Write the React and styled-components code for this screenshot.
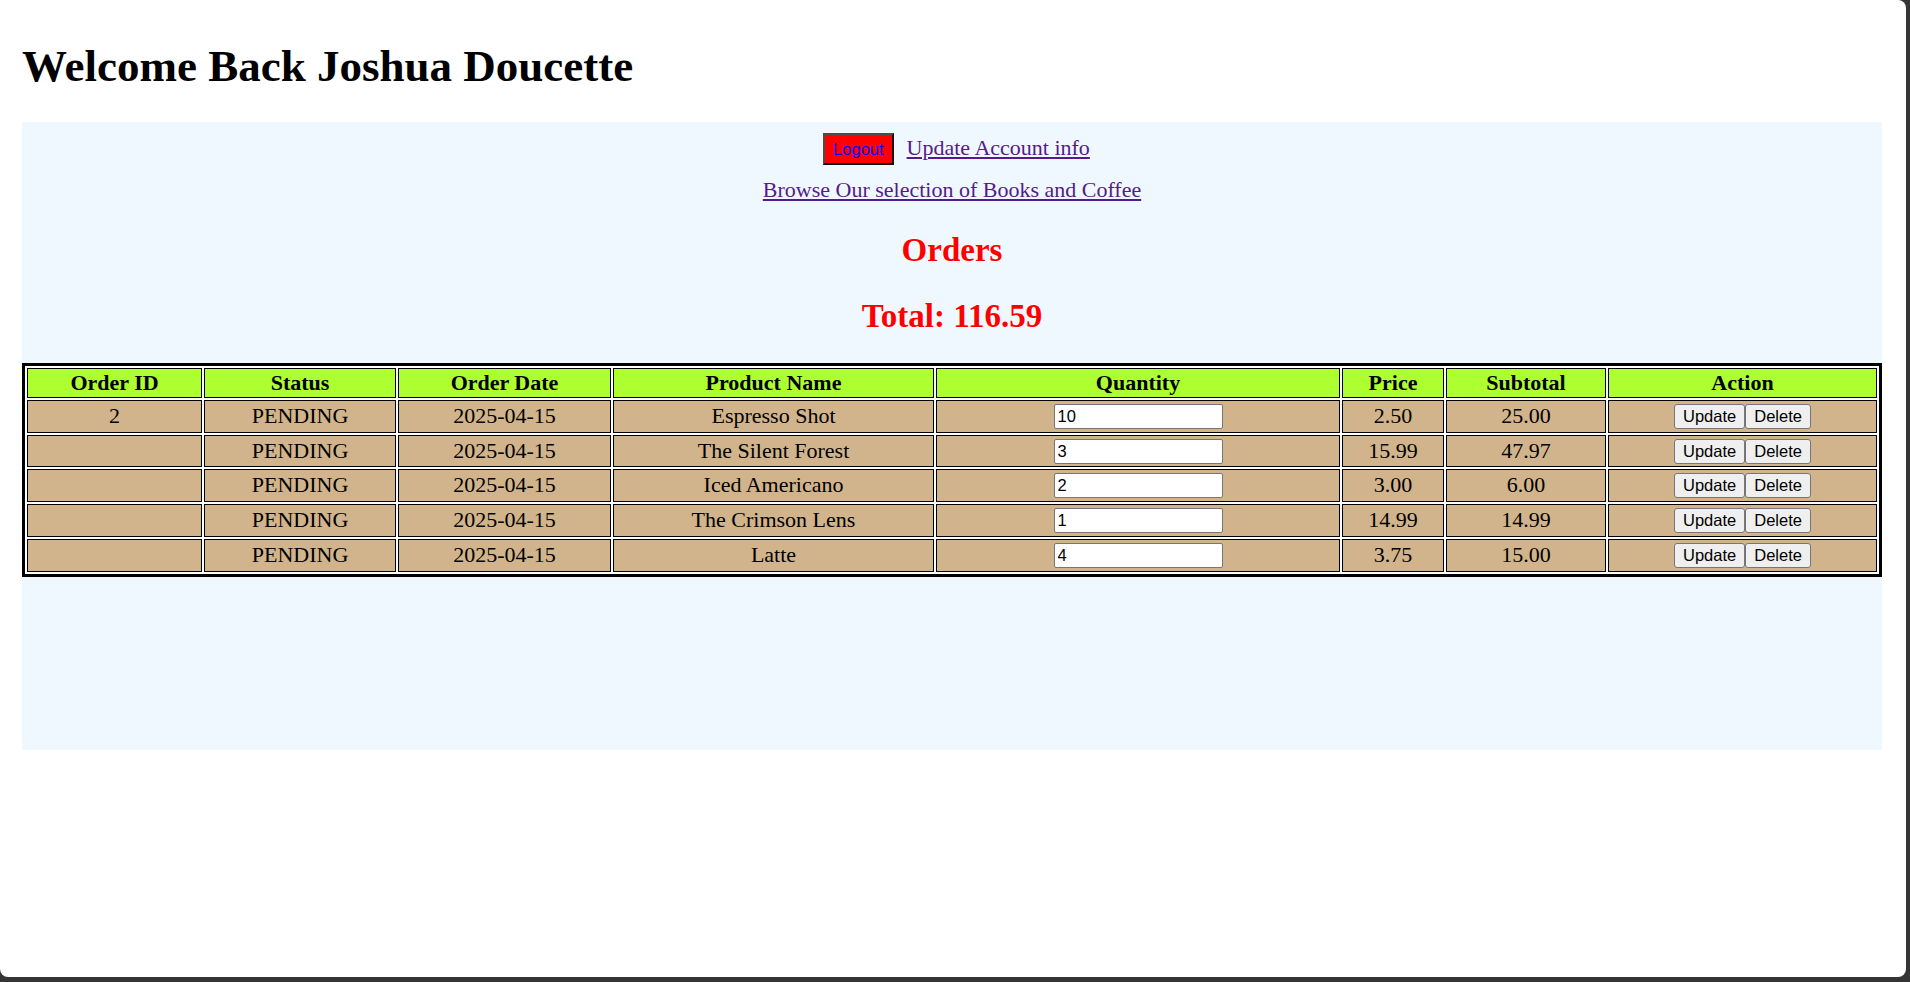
import styled, { createGlobalStyle } from "styled-components";

const GlobalStyle = createGlobalStyle`
  html {
    background: #353535;
  }
  body {
    margin: 0;
  }
`;

// the white browser page inside the dark window edge
const Page = styled.div`
  box-sizing: border-box;
  width: 1906px;
  height: 977px;
  padding: 11px 24px 0 22px;
  background: #ffffff;
  border-radius: 0 8px 8px 8px;
  overflow: hidden;
  font-family: "Liberation Serif", "Times New Roman", serif;
  font-size: 22px;
  color: #000;
`;

const Title = styled.h1`
  margin: 30px 0;
  font-size: 45px;
  line-height: 51px;
  font-weight: bold;
`;

const Panel = styled.div`
  box-sizing: border-box;
  min-height: 628px;
  padding-top: 11px;
  background: #f0f8ff; /* aliceblue */
  text-align: center;
`;

const NavRow = styled.div`
  display: flex;
  justify-content: center;
  align-items: baseline;
  gap: 13px;
  padding-left: 9px;
`;

const LogoutButton = styled.button`
  height: 32px;
  padding: 4px 8px;
  background: #ff0000;
  color: #0000ff;
  font-family: "Liberation Sans", Arial, sans-serif;
  font-size: 16.5px;
  border-style: solid;
  border-width: 2px;
  border-color: #4b4b4b #111 #111 #4b4b4b;
  cursor: pointer;
`;

const Link = styled.a`
  color: #551a8b;
  text-decoration: underline;
  line-height: 25px;
`;

const BrowseRow = styled.div`
  margin: 12px 0 29px;
  line-height: 25px;
`;

const Heading = styled.h2`
  margin: 28px 0;
  color: #ff0000;
  font-size: 33px;
  line-height: 38px;
  font-weight: bold;
`;

const OrdersTable = styled.table`
  width: 100%;
  table-layout: fixed;
  border: 3px solid #000;
  border-spacing: 2px;
  background: #ffffff;
`;

const HeadCell = styled.th`
  padding: 2px;
  line-height: 24px;
  background: #adff2f; /* greenyellow */
  border: 1px solid #000;
  font-weight: bold;
  text-align: center;
`;

const Cell = styled.td`
  padding: 2px;
  line-height: 26.7px;
  background: #d2b48c; /* tan */
  border: 1px solid #000;
  text-align: center;
  vertical-align: middle;
`;

const QtyInput = styled.input`
  box-sizing: border-box;
  width: 169px;
  height: 25px;
  margin: 1px 0 0;
  padding: 1px 3px;
  vertical-align: top;
  border: 1px solid #767676;
  border-radius: 2px;
  background: #fff;
  font-family: "Liberation Sans", Arial, sans-serif;
  font-size: 16.5px;
  color: #000;
`;

const ActionButton = styled.button`
  box-sizing: border-box;
  height: 25px;
  margin: 1px 0 0;
  padding: 1px 8px;
  vertical-align: top;
  background: #efefef;
  border: 1px solid #767676;
  border-radius: 3px;
  font-family: "Liberation Sans", Arial, sans-serif;
  font-size: 16.5px;
  color: #000;
`;

const columns = [
  { label: "Order ID", width: 175 },
  { label: "Status", width: 192 },
  { label: "Order Date", width: 213 },
  { label: "Product Name", width: 321 },
  { label: "Quantity", width: 404 },
  { label: "Price", width: 102 },
  { label: "Subtotal", width: 160 },
  { label: "Action", width: 269 },
];

const items = [
  { name: "Espresso Shot", qty: 10, price: "2.50", subtotal: "25.00" },
  { name: "The Silent Forest", qty: 3, price: "15.99", subtotal: "47.97" },
  { name: "Iced Americano", qty: 2, price: "3.00", subtotal: "6.00" },
  { name: "The Crimson Lens", qty: 1, price: "14.99", subtotal: "14.99" },
  { name: "Latte", qty: 4, price: "3.75", subtotal: "15.00" },
];

const App = () => {
  return (
    <Page>
      <GlobalStyle />
      <Title>Welcome Back Joshua Doucette</Title>
      <Panel>
        <NavRow>
          <LogoutButton>Logout</LogoutButton>
          <Link href="#">Update Account info</Link>
        </NavRow>
        <BrowseRow>
          <Link href="#">Browse Our selection of Books and Coffee</Link>
        </BrowseRow>
        <Heading>Orders</Heading>
        <Heading>Total: 116.59</Heading>
        <OrdersTable>
          <colgroup>
            {columns.map((col) => (
              <col key={col.label} style={{ width: col.width }} />
            ))}
          </colgroup>
          <thead>
            <tr>
              {columns.map((col) => (
                <HeadCell key={col.label}>{col.label}</HeadCell>
              ))}
            </tr>
          </thead>
          <tbody>
            {items.map((item, index) => (
              <tr key={item.name}>
                <Cell>{index === 0 ? "2" : ""}</Cell>
                <Cell>PENDING</Cell>
                <Cell>2025-04-15</Cell>
                <Cell>{item.name}</Cell>
                <Cell>
                  <QtyInput type="text" defaultValue={item.qty} />
                </Cell>
                <Cell>{item.price}</Cell>
                <Cell>{item.subtotal}</Cell>
                <Cell>
                  <ActionButton>Update</ActionButton>
                  <ActionButton>Delete</ActionButton>
                </Cell>
              </tr>
            ))}
          </tbody>
        </OrdersTable>
      </Panel>
    </Page>
  );
};

export default App;
